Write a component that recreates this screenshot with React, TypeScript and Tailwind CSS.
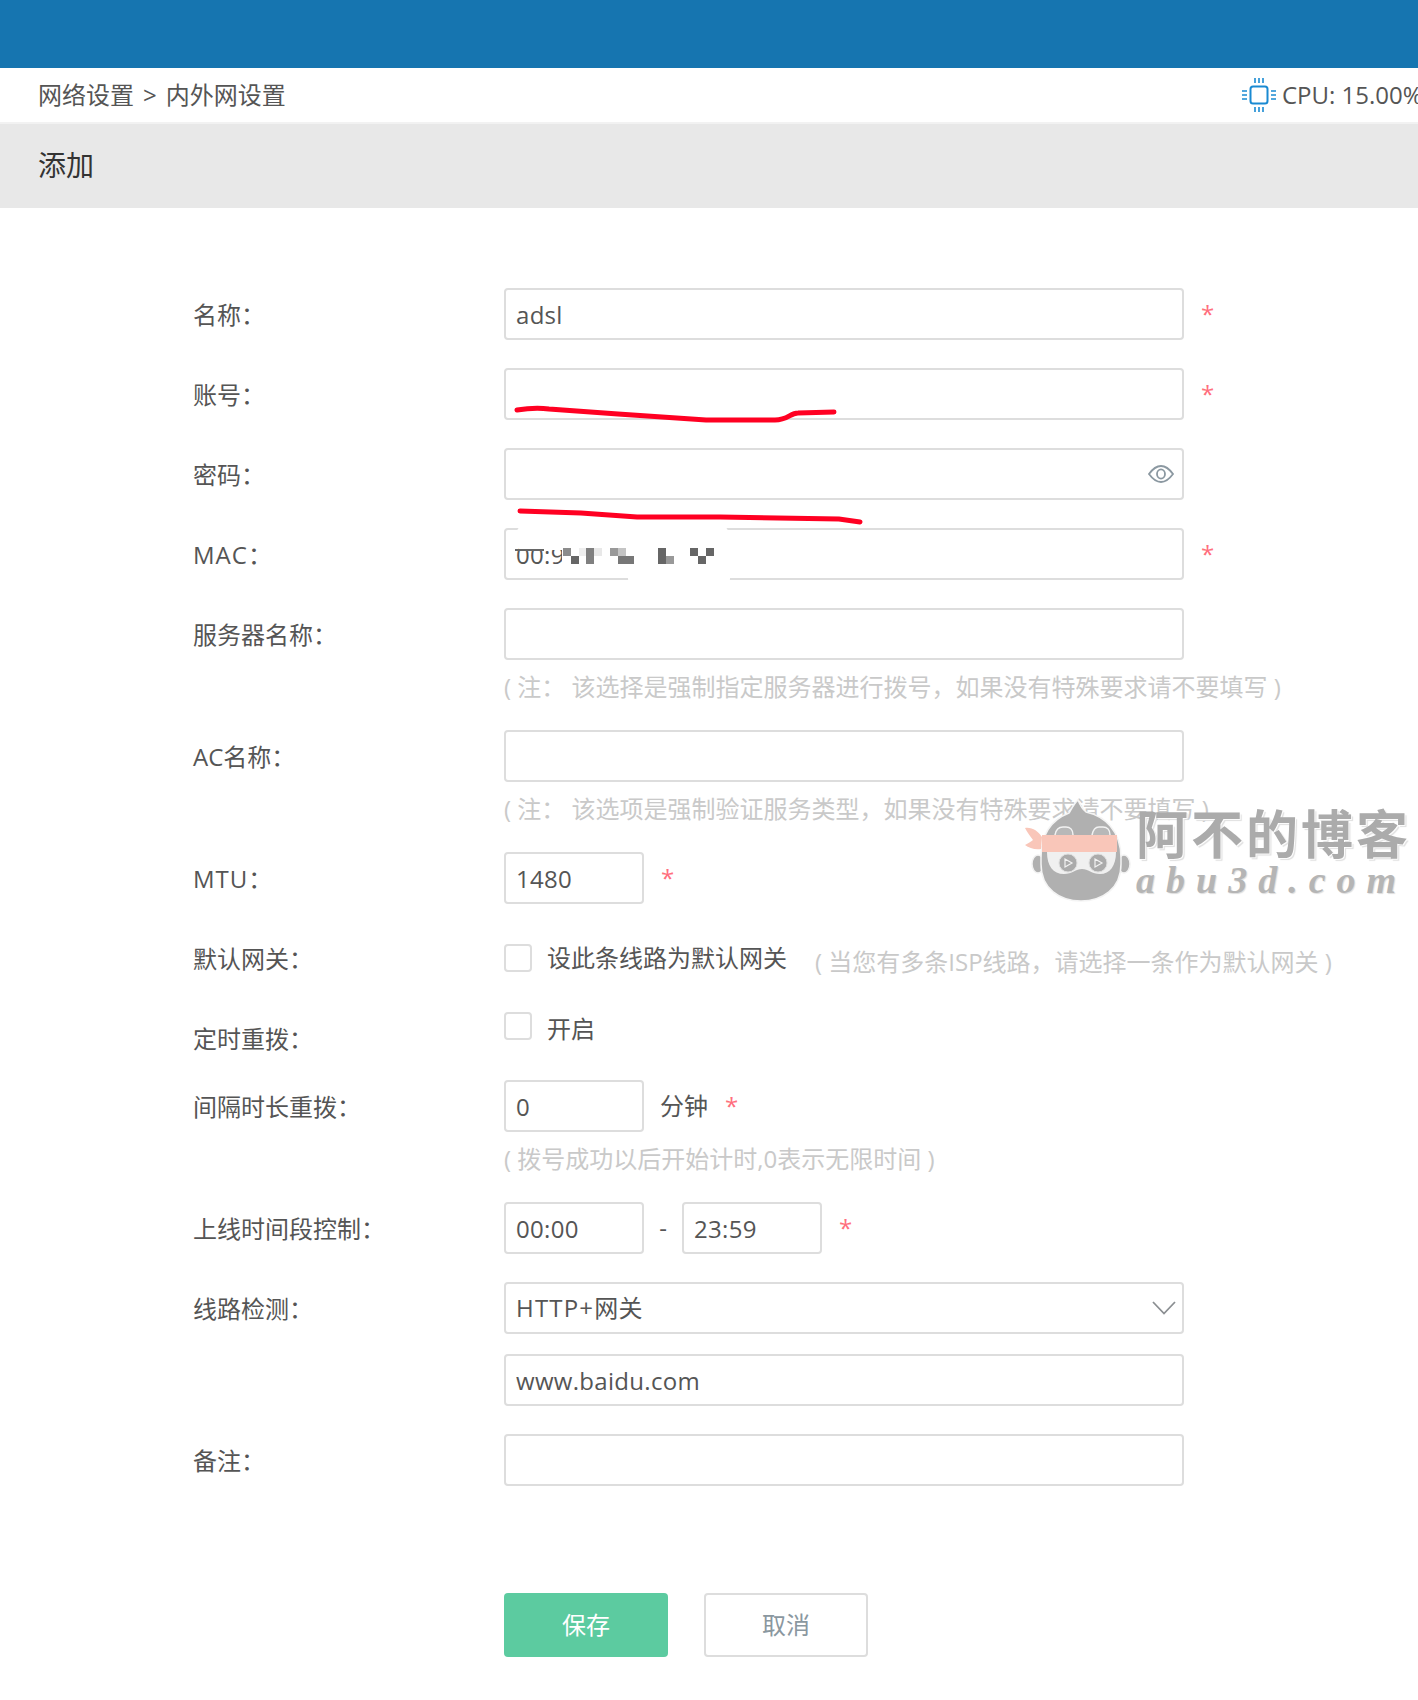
import type { ReactNode } from "react";

const pageFont = "font-['Open_Sans','Noto_Sans_CJK_SC',sans-serif]";
const inputBox =
  "h-[52px] rounded-[4px] border-2 border-[#dddddd] bg-white px-[10px] text-[24px] tracking-[0.3px] text-[#555555] outline-none";

function Star({ className = "" }: { className?: string }) {
  return <span className={`text-[24px] leading-none text-[#ff6f7d] ${className}`}>*</span>;
}

function Hint({ children, className = "" }: { children: ReactNode; className?: string }) {
  return <div className={`text-[24px] leading-[30px] whitespace-nowrap text-[#c9c9c9] ${className}`}>{children}</div>;
}

function Row({ label, children, className = "mb-[28px]", labelClass = "" }: {
  label?: string;
  children: ReactNode;
  className?: string;
  labelClass?: string;
}) {
  return (
    <div className={`flex items-start ${className}`}>
      <label className={`h-[52px] w-[311px] shrink-0 text-[24px] leading-[54px] text-[#555555] ${labelClass}`}>
        {label}
      </label>
      <div className="min-w-0 flex-1">{children}</div>
    </div>
  );
}

function CpuIcon() {
  return (
    <svg width="34" height="34" viewBox="0 0 34 34" fill="none" stroke="#1a8ad2" strokeWidth="1.6">
      <rect x="8.5" y="8.5" width="17" height="17" rx="2.5" strokeWidth="2" />
      <path d="M13 0v5M17 0v5M21 0v5M13 29v5M17 29v5M21 29v5M0 13h5M0 17h5M0 21h5M29 13h5M29 17h5M29 21h5" />
    </svg>
  );
}

function Watermark() {
  return (
    <div className="pointer-events-none absolute top-[798px] left-[1020px] h-[110px] w-[398px]">
      <svg className="absolute top-0 left-0" width="120" height="110" viewBox="0 0 120 110">
        {/* ears */}
        <ellipse cx="18" cy="66" rx="6" ry="9" fill="#b0b0b0" stroke="#f2f2f2" strokeWidth="1.5" />
        <ellipse cx="104" cy="66" rx="6" ry="9" fill="#b0b0b0" stroke="#f2f2f2" strokeWidth="1.5" />
        {/* head with tuft */}
        <path d="M21 60 C21 32 36 20 49 15 C52 10 54 6 58 2 C60 7 62 11 66 14 C84 18 101 32 101 60 L101 66 C101 91 82 103 61 103 C40 103 21 91 21 66 Z" fill="#b0b0b0" stroke="#f4f4f4" strokeWidth="1.5" />
        <path d="M35 37 C36 31 39 29 43 29 H46 C50 29 53 32 53 37 M72 37 C73 32 75 29 79 29 H83 C87 29 90 32 90 37" fill="#b8b8b8" stroke="#f2f2f2" strokeWidth="1.5" />
        {/* headband */}
        <rect x="22" y="37" width="75" height="17" fill="#f9c6b9" />
        <path d="M5 30 C12 29 18 33 22 39 L21 51 C15 52 9 50 5 47 C8 45 11 44 13 42 C10 38 7 34 5 30 Z" fill="#f9c6b9" />
        {/* goggles */}
        <path d="M27 54 H96 C96 68 90 76 80 76 C72 76 68 71 62 71 C56 71 52 76 44 76 C33 76 27 68 27 54 Z" fill="#f0f0f0" />
        <circle cx="48" cy="65" r="9" fill="#ababab" stroke="#dddddd" strokeWidth="1" />
        <circle cx="78" cy="65" r="9" fill="#ababab" stroke="#dddddd" strokeWidth="1" />
        <path d="M45 61 L52 65 L45 69 Z M75 61 L82 65 L75 69 Z" fill="none" stroke="#f2f2f2" strokeWidth="1.2" />
      </svg>
      <div className="absolute top-[2px] left-[116px] font-['Noto_Sans_CJK_SC',sans-serif] text-[52px] leading-[64px] font-bold tracking-[3px] whitespace-nowrap text-[#ababab] [text-shadow:1px_1px_1px_#ffffff,2px_2px_1px_#dddddd]">
        阿不的博客
      </div>
      <div className="absolute top-[60px] left-[116px] font-['Liberation_Serif',serif] text-[38px] leading-[44px] font-bold tracking-[11px] whitespace-nowrap text-[#b5b5b5] italic [text-shadow:1px_1px_1px_#dddddd]">
        abu3d.com
      </div>
    </div>
  );
}

// red marks and the mosaic someone painted on the screenshot
function Redactions() {
  const mosaic: [number, number, string][] = [
    [563, 548, "#8c8c8c"], [571, 556, "#666666"], [579, 548, "#eeeeee"],
    [586, 548, "#808080"], [586, 556, "#808080"], [594, 548, "#e8e8e8"],
    [610, 548, "#999999"], [618, 548, "#c4c4c4"], [618, 556, "#777777"],
    [626, 556, "#777777"], [658, 548, "#666666"], [658, 556, "#666666"],
    [666, 556, "#999999"], [690, 548, "#666666"], [698, 556, "#666666"],
    [706, 548, "#666666"],
  ];
  return (
    <svg className="pointer-events-none absolute top-0 left-0" width="1418" height="1700">
      <path d="M517 410 C530 408 540 408 549 409 L618 414 L706 420 L775 420 C788 420 790 413 798 413 L834 412" fill="none" stroke="#ff0022" strokeWidth="5" strokeLinecap="round" />
      <path d="M520 511 L581 513 L637 517 L720 517 L839 519 L860 522" fill="none" stroke="#ff0022" strokeWidth="5" strokeLinecap="round" />
      <rect x="517" y="526" width="211" height="24" rx="6" fill="#ffffff" />
      <rect x="515" y="549" width="29" height="2" fill="#666666" />
      <rect x="628" y="572" width="102" height="12" rx="5" fill="#ffffff" />
      <rect x="562" y="546" width="60" height="20" fill="#ffffff" />
      {mosaic.map(([x, y, fill]) => (
        <rect key={`${x}-${y}`} x={x} y={y} width={8} height={8} fill={fill} />
      ))}
    </svg>
  );
}

export default function App() {
  return (
    <div className={`relative h-[1700px] w-full overflow-hidden bg-white ${pageFont}`}>
      <div className="h-[68px] bg-[#1675b0]" />
      <div className="flex h-[56px] items-center justify-between border-b-2 border-[#f2f2f2] pl-[38px]">
        <div className="text-[24px] whitespace-nowrap text-[#555555]">
          网络设置<span className="mx-[9px]">&gt;</span>内外网设置
        </div>
        <div className="flex w-[176px] shrink-0 items-center gap-[6px] overflow-hidden whitespace-nowrap">
          <span className="shrink-0"><CpuIcon /></span>
          <span className="text-[24px] text-[#555555]">CPU: 15.00%</span>
        </div>
      </div>
      <div className="flex h-[84px] items-center bg-[#e8e8e8] pb-[2px] pl-[38px] text-[28px] text-[#333333]">添加</div>

      <form className="pt-[80px] pl-[193px]">
        <Row label="名称：">
          <div className="flex items-center">
            <input className={`${inputBox} w-[680px]`} defaultValue="adsl" readOnly />
            <Star className="ml-[17px]" />
          </div>
        </Row>
        <Row label="账号：">
          <div className="flex items-center">
            <input className={`${inputBox} w-[680px]`} readOnly />
            <Star className="ml-[17px]" />
          </div>
        </Row>
        <Row label="密码：">
          <div className={`${inputBox} flex w-[680px] items-center justify-end pr-[8px]`}>
            <svg width="26" height="18" viewBox="0 0 26 18" fill="none" stroke="#8b98a1" strokeWidth="1.8">
              <path d="M1 9 C5 3.5 9 1 13 1 C17 1 21 3.5 25 9 C21 14.5 17 17 13 17 C9 17 5 14.5 1 9 Z" />
              <ellipse cx="13" cy="9" rx="4" ry="4.6" />
            </svg>
          </div>
        </Row>
        <Row label="MAC：" labelClass="tracking-[1px]">
          <div className="flex items-center">
            <input className={`${inputBox} w-[680px]`} defaultValue="00:9" readOnly />
            <Star className="ml-[17px]" />
          </div>
        </Row>
        <Row label="服务器名称：">
          <input className={`${inputBox} block w-[680px]`} readOnly />
          <Hint className="h-[42px] pt-[12px]">( 注： 该选择是强制指定服务器进行拨号，如果没有特殊要求请不要填写 )</Hint>
        </Row>
        <Row label="AC名称：">
          <input className={`${inputBox} block w-[680px]`} readOnly />
          <Hint className="h-[42px] pt-[12px]">( 注： 该选项是强制验证服务类型，如果没有特殊要求请不要填写 )</Hint>
        </Row>
        <Row label="MTU：" labelClass="tracking-[1px]">
          <div className="flex items-center">
            <input className={`${inputBox} w-[140px]`} defaultValue="1480" readOnly />
            <Star className="ml-[17px]" />
          </div>
        </Row>
        <Row label="默认网关：" className="mb-0 h-[66px]">
          <div className="flex h-[52px] items-center">
            <span className="h-[28px] w-[28px] rounded-[4px] border-2 border-[#dddddd]" />
            <span className="ml-[15px] text-[24px] whitespace-nowrap text-[#555555]">设此条线路为默认网关</span>
            <Hint className="mt-[8px] ml-[28px]">( 当您有多条ISP线路，请选择一条作为默认网关 )</Hint>
          </div>
        </Row>
        <Row label="定时重拨：" className="h-[82px]" labelClass="mt-[14px]">
          <div className="mt-[14px] flex h-[28px] items-center">
            <span className="h-[28px] w-[28px] rounded-[4px] border-2 border-[#dddddd]" />
            <span className="mt-[6px] ml-[15px] text-[24px] text-[#555555]">开启</span>
          </div>
        </Row>
        <Row label="间隔时长重拨：">
          <div className="flex items-center">
            <input className={`${inputBox} w-[140px]`} defaultValue="0" readOnly />
            <span className="ml-[16px] text-[24px] text-[#555555]">分钟</span>
            <Star className="ml-[17px]" />
          </div>
          <Hint className="h-[42px] pt-[12px]">( 拨号成功以后开始计时,0表示无限时间 )</Hint>
        </Row>
        <Row label="上线时间段控制：">
          <div className="flex items-center">
            <input className={`${inputBox} w-[140px]`} defaultValue="00:00" readOnly />
            <span className="w-[38px] text-center text-[24px] text-[#555555]">-</span>
            <input className={`${inputBox} w-[140px]`} defaultValue="23:59" readOnly />
            <Star className="ml-[17px]" />
          </div>
        </Row>
        <Row label="线路检测：" className="mb-[20px]">
          <div className={`${inputBox} flex w-[680px] items-center justify-between pr-[6px]`}>
            <span><span className="tracking-[1.2px]">HTTP+</span>网关</span>
            <svg width="24" height="14" viewBox="0 0 24 14" fill="none" stroke="#8b8f92" strokeWidth="1.8">
              <path d="M1 1 L12 12.5 L23 1" />
            </svg>
          </div>
        </Row>
        <Row>
          <input className={`${inputBox} block w-[680px]`} defaultValue="www.baidu.com" readOnly />
        </Row>
        <Row label="备注：" className="mb-[107px]">
          <input className={`${inputBox} block w-[680px]`} readOnly />
        </Row>
        <div className="flex gap-[36px] pl-[311px]">
          <button type="button" className="h-[64px] w-[164px] rounded-[4px] bg-[#5ccba0] text-[24px] text-white">保存</button>
          <button type="button" className="h-[64px] w-[164px] rounded-[4px] border-2 border-[#dddddd] bg-white text-[24px] text-[#8a979f]">取消</button>
        </div>
      </form>

      <Redactions />
      <Watermark />
    </div>
  );
}
